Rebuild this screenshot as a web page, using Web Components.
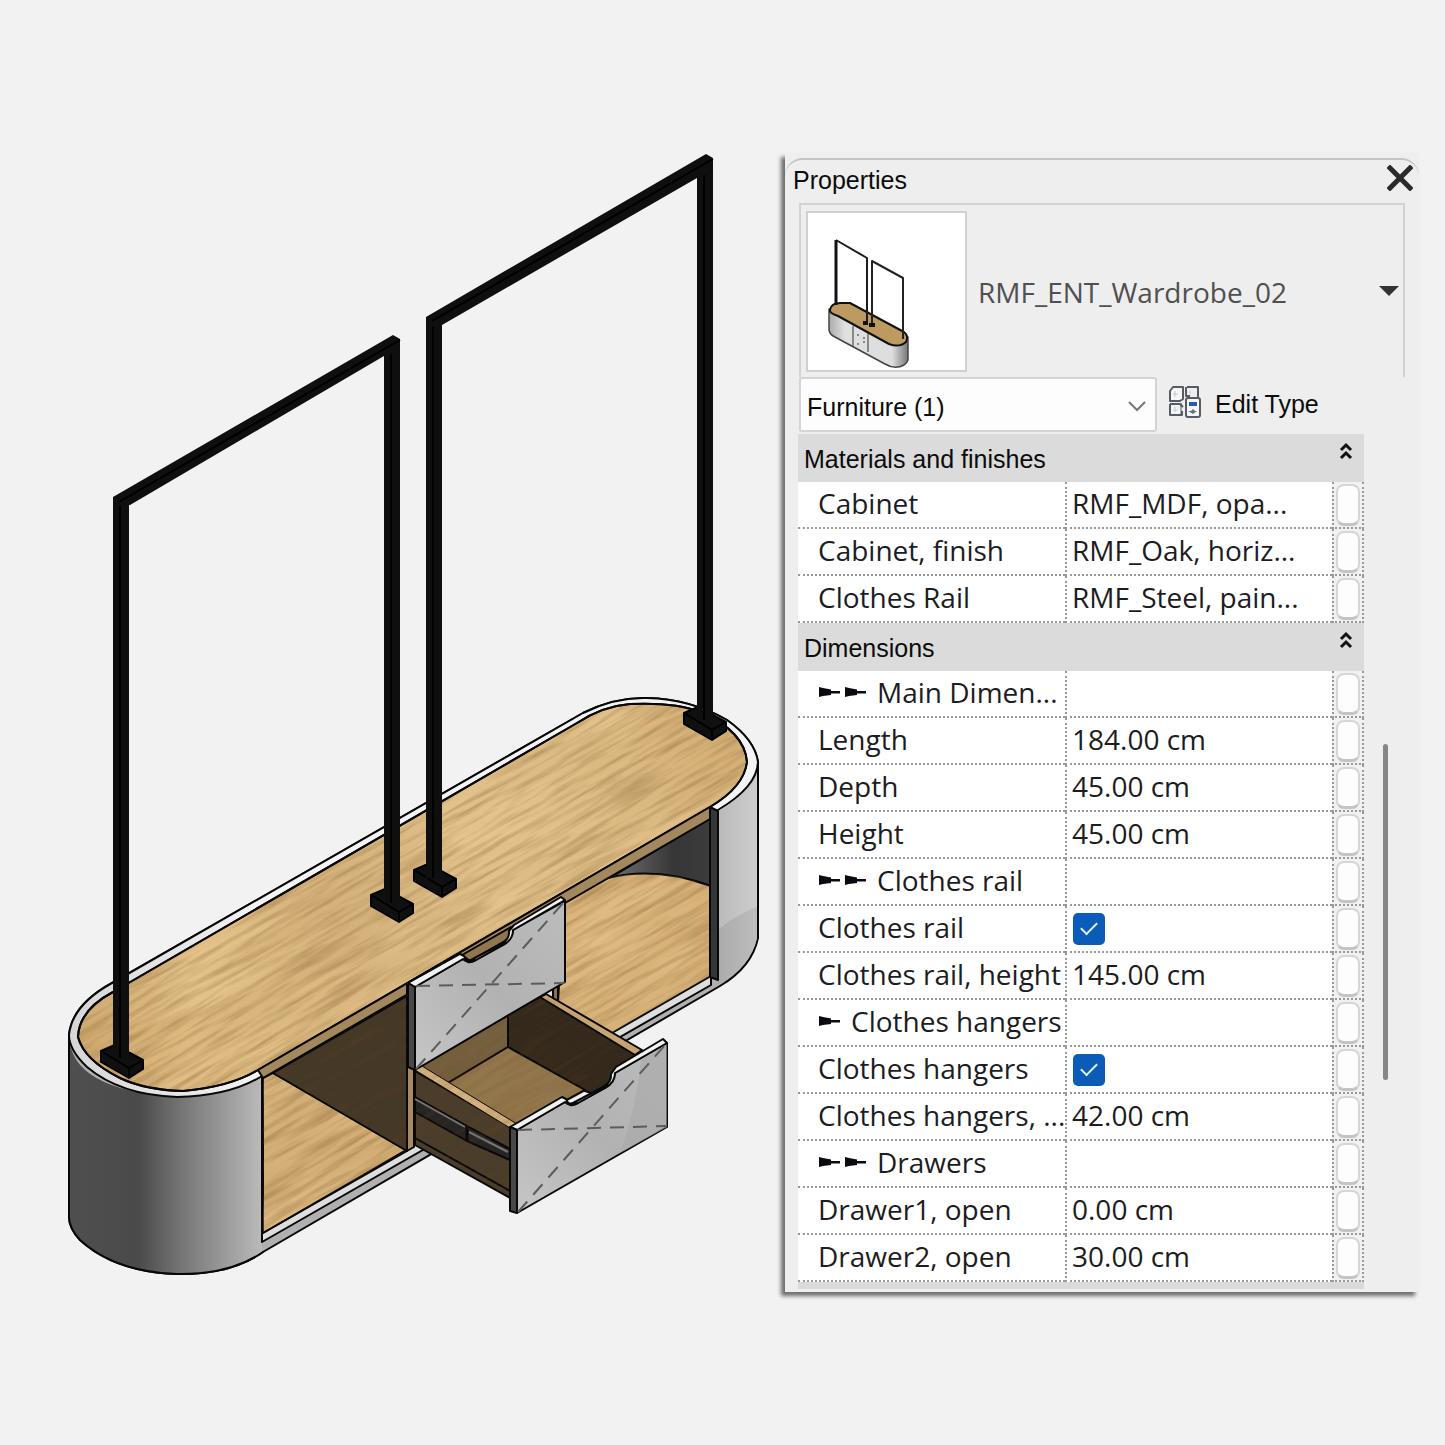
<!DOCTYPE html>
<html lang="en">
<head>
<meta charset="utf-8">
<title>RMF_ENT_Wardrobe_02</title>
<style>
  body { margin: 0; background: #f2f2f2; font-family: "Open Sans", "Noto Sans", sans-serif; color: #1c1c22; }
</style>
</head>
<body>
<product-sheet>
  <wardrobe-drawing slot="model"></wardrobe-drawing>
  <properties-panel slot="panel">
    <type-selector slot="type" name="RMF_ENT_Wardrobe_02"></type-selector>
    <category-bar slot="filter"></category-bar>
    <property-group heading="Materials and finishes"></property-group>
    <property-group heading="Dimensions"></property-group>
  </properties-panel>
</product-sheet>

<script>
const GROUPS = {
  "Materials and finishes": [
    { label: "Cabinet", value: "RMF_MDF, opa..." },
    { label: "Cabinet, finish", value: "RMF_Oak, horiz..." },
    { label: "Clothes Rail", value: "RMF_Steel, pain..." }
  ],
  "Dimensions": [
    { marks: 2, label: "Main Dimen..." },
    { label: "Length", value: "184.00 cm" },
    { label: "Depth", value: "45.00 cm" },
    { label: "Height", value: "45.00 cm" },
    { marks: 2, label: "Clothes rail" },
    { label: "Clothes rail", check: true },
    { label: "Clothes rail, height", value: "145.00 cm" },
    { marks: 1, label: "Clothes hangers" },
    { label: "Clothes hangers", check: true },
    { label: "Clothes hangers, ...", value: "42.00 cm" },
    { marks: 2, label: "Drawers" },
    { label: "Drawer1, open", value: "0.00 cm" },
    { label: "Drawer2, open", value: "30.00 cm" }
  ]
};

class BaseElement extends HTMLElement {
  connectedCallback() {
    if (this.shadowRoot) return;
    this.attachShadow({ mode: "open" }).innerHTML = this.render();
  }
}

customElements.define("product-sheet", class extends BaseElement {
  render() {
    return `
<style>
  :host { display: grid; grid-template-columns: minmax(0, 785fr) minmax(0, 660fr); align-items: start; min-height: 100vh; box-sizing: border-box; padding-top: 150px; }
  main { display: contents; }
</style>
<main><slot name="model"></slot><slot name="panel"></slot></main>`;
  }
});

customElements.define("properties-panel", class extends BaseElement {
  render() {
    return `
<style>
  :host { display: block; margin: 3px 26px 0 0; background: #eee; box-shadow: -4px 4px 4px rgba(0,0,0,.55); padding-top: 5px; }
  .frame { border-top: 2px solid #c4c4c4; border-radius: 18px 18px 0 0; padding: 0 0 3px 13px; }
  header { display: flex; align-items: flex-start; justify-content: space-between; height: 43px; margin-left: -5px; padding-right: 6px; }
  h1 { margin: 0; font: 400 25px/40px "Liberation Sans", sans-serif; color: #0c0c0c; }
  button { border: 0; padding: 0; background: none; display: flex; width: 26px; height: 36px; align-items: center; }
  .body { display: flex; align-items: center; gap: 19px; padding-right: 31px; }
  .list { flex: 1; min-width: 0; padding-bottom: 7px; background: #dadada; }
  .thumb { width: 5px; height: 336px; border-radius: 3px; background: #868686; margin-top: 100px; }
</style>
<section class="frame">
  <header>
    <h1>Properties</h1>
    <button aria-label="Close"><svg width="26" height="26" viewBox="0 0 26 26"><path d="M3 3 23 23M23 3 3 23" stroke="#2b2b2b" stroke-width="5" stroke-linecap="square" fill="none"/></svg></button>
  </header>
  <slot name="type"></slot>
  <slot name="filter"></slot>
  <div class="body"><div class="list"><slot></slot></div><div class="thumb"></div></div>
</section>`;
  }
});

customElements.define("type-selector", class extends BaseElement {
  render() {
    return `
<style>
  :host { display: block; margin: 0 14px 0 1px; }
  button { box-sizing: border-box; display: flex; align-items: center; gap: 11px; width: 100%; height: 174px; padding: 0 4px 0 5px; background: none; border: 2px solid #d2d2d2; border-bottom: 0; font: inherit; font-size: 28px; line-height: 40px; color: #505050; text-align: left; }
  .pic { box-sizing: border-box; width: 161px; height: 161px; border: 2px solid #d0d0d0; background: #fff; display: block; }
  span { flex: 1; padding-top: 2px; }
</style>
<button>
  <svg class="pic" viewBox="808 212 157 157" stroke-linejoin="round">
    <defs><linearGradient id="b"><stop stop-color="#aaa"/><stop offset=".2" stop-color="#e0e0e0"/><stop offset=".8" stop-color="#ddd"/><stop offset="1" stop-color="#777"/></linearGradient></defs>
    <path d="M829 308V329Q830 334 835 336L885 363Q895 369 904 364Q908 361 908 358V336L880 330Z" fill="url(#b)" stroke="#444" stroke-width="1.500"/>
    <path d="M830 309Q831 301 843 302L850 302 904 331Q909 335 906 341Q899 347 889 343L838 315Q829 312 830 309Z" fill="#bd9a60" stroke="#111" stroke-width="2"/>
    <path d="M853 325V345M868 332V351M857 334h2M863 341h2M863 337h2M857 343h2" stroke="#333" stroke-width="1"/>
    <path d="M836 304V239" stroke="#111" stroke-width="3"/>
    <path d="M836 239 867 257V322" fill="none" stroke="#1c1c1c" stroke-width="2"/>
    <path d="M872 324V260L903 277V338" fill="none" stroke="#222" stroke-width="2"/>
    <path d="M863 322h5M869 324h6" stroke="#111" stroke-width="4"/>
  </svg>
  <span>${this.getAttribute("name")}</span>
  <svg width="20" height="10" viewBox="0 0 20 10"><path d="M0 0H20L10 10Z" fill="#333"/></svg>
</button>`;
  }
});

customElements.define("category-bar", class extends BaseElement {
  render() {
    return `
<style>
  :host { display: flex; gap: 11px; height: 57px; margin-left: 1px; color: #0c0c0c; }
  .pick { display: grid; width: 358px; height: 55px; }
  select, .pick svg { grid-area: 1 / 1; }
  select { appearance: none; box-sizing: border-box; border: 2px solid #d4d4d4; border-radius: 3px; background: #fdfdfd; padding: 5px 6px 0; margin: 0; font: 25px/40px "Liberation Sans", sans-serif; color: inherit; }
  .pick svg { place-self: center end; margin: 2px 10px 0 0; pointer-events: none; }
  button { display: flex; align-items: center; gap: 13px; height: 50px; padding: 0; border: 0; background: none; font: 25px/40px "Liberation Sans", sans-serif; color: inherit; white-space: nowrap; }
  button span { padding-top: 3px; }
</style>
<div class="pick">
  <select aria-label="Category"><option>Furniture (1)</option></select>
  <svg width="20" height="12" viewBox="0 0 20 12"><path d="M2 2 10 10 18 2" fill="none" stroke="#777" stroke-width="2"/></svg>
</div>
<button>
  <svg width="34" height="34" viewBox="0 0 34 34" fill="#f6f6f6" stroke="#555c63" stroke-width="2" stroke-linejoin="round">
    <path d="M5 2H15V14L12 16H2V6Z"/><path d="M19 2H30V12M18 2V11H22" fill="none"/>
    <path d="M2 19H12L15 22M2 19V30H14V26" /><path d="M13 18V30" fill="none" stroke-width="1"/>
    <path d="M7 6V12M5 9H10M7 22V27M5 25H10M22 6V9" stroke="#c4c8cc" stroke-width="1"/>
    <rect x="18" y="13" width="14" height="19" rx="2" stroke-width="2"/>
    <rect x="21" y="17" width="8" height="4" fill="#1c62ad" stroke="none"/><path d="M20 26H23L25 24 27 26H29L25 29Z" fill="#6a7178" stroke="none"/>
  </svg>
  <span>Edit Type</span>
</button>`;
  }
});

customElements.define("property-group", class extends BaseElement {
  row(item, i) {
    const mark = `<svg class="mark" width="23" height="12" viewBox="0 0 23 12"><path d="M1 1 5 2 13 3.500V5H22V7.500H13V9L5 10 1 11Z" fill="#0a0a10"/></svg>`;
    const marks = item.marks ? `<span class="marks">${mark.repeat(item.marks)}</span>` : "";
    const id = "p" + i;
    const label = item.check ? `<label for="${id}">${item.label}</label>` : item.label;
    const value = item.check ? `<input type="checkbox" id="${id}" checked>` : (item.value || "");
    return `<tr><th scope="row">${marks}${label}</th><td>${value}</td><td class="assoc"><button aria-label="Associate parameter"></button></td></tr>`;
  }
  render() {
    const heading = this.getAttribute("heading");
    return `
<style>
  :host { display: block; }
  header { display: flex; justify-content: space-between; height: 48px; background: #dbdbdb; padding: 0 10px 0 6px; }
  h2 { margin: 0; font: 400 25px/50px "Liberation Sans", sans-serif; color: #0c0c0c; }
  header button { border: 0; background: none; padding: 8px 0 0; height: 26px; }
  header svg { display: block; }
  table { width: 100%; table-layout: fixed; border-spacing: 0; background: #fff; font-size: 28px; }
  col.side { width: 32px; }
  th, td { box-sizing: border-box; height: 47px; padding: 0 0 3px 5px; line-height: 42px; font-weight: 400; text-align: left; white-space: nowrap; overflow: hidden; border-bottom: 2px dotted #999; }
  th { padding-left: 20px; }
  td { border-left: 2px dotted #999; }
  .marks { display: inline-flex; gap: 3px; margin-right: 10px; vertical-align: 5px; }
  .mark { display: block; }
  td.assoc { padding: 0; border-right: 2px dotted #999; background: #f1f1f1; }
  .assoc button { box-sizing: border-box; display: block; margin: 1px auto 0; width: 24px; height: 42px; border: 2px solid #d6d6d6; border-bottom: 3px solid #c4c4c4; border-radius: 8px; background: #fdfdfd; padding: 0; }
  input { appearance: none; display: block; width: 32px; height: 32px; margin: 3px 0 0 1px; border-radius: 5px; background: #0a5cb8; position: relative; }
  input::after { content: ""; position: absolute; left: 8px; top: 9px; width: 14px; height: 7px; border: solid #e4f0fc; border-width: 0 0 2px 2px; transform: rotate(-45deg); }
</style>
<header>
  <h2>${heading}</h2>
  <button aria-label="Collapse"><svg width="16" height="18" viewBox="0 0 16 18"><path d="M3 8 8 3 13 8M3 16 8 11 13 16" fill="none" stroke="#111" stroke-width="3"/></svg></button>
</header>
<table><colgroup><col><col><col class="side"></colgroup><tbody>${GROUPS[heading].map((r, i) => this.row(r, i)).join("")}</tbody></table>`;
  }
});

customElements.define("wardrobe-drawing", class extends BaseElement {
  post(x, y1, y2) {
    return `<path d="M${x} ${y1}h16V${y2}h-16Z" fill="#0f0f0f" stroke="none"/><path d="M${x + 7} ${y1 + 6}V${y2}" stroke="#000" stroke-width="2"/>`;
  }
  foot(x, y) {
    return `<path d="M${x} ${y}l14-6 28 15v9l-14 9-28-16Z" fill="#101010" stroke="#000"/><path d="M${x} ${y}l28 17 14-8M${x + 28} ${y + 17}v10" stroke="#000" fill="none"/>`;
  }
  render() {
    return `
<style>
  :host { display: block; padding: 0 20px 0 60px; }
  svg { display: block; width: 100%; height: auto; }
</style>
<svg viewBox="60 150 705 1130" role="img" aria-label="Wardrobe" stroke-linejoin="round" fill="none">
  <defs>
    <linearGradient id="cyl" x1="69" x2="263" y1="0" y2="0" gradientUnits="userSpaceOnUse">
      <stop stop-color="#4f4f4f"/><stop offset=".36" stop-color="#4a4a4a"/><stop offset=".55" stop-color="#707070"/><stop offset=".8" stop-color="#9a9a9a"/><stop offset="1" stop-color="#bbb"/>
    </linearGradient>
    <linearGradient id="rim" x1="69" x2="263" y1="0" y2="0" gradientUnits="userSpaceOnUse"><stop stop-color="#d6d6d6"/><stop offset="1" stop-color="#f4f4f4"/></linearGradient>
    <linearGradient id="wall" x1="718" x2="758" y1="0" y2="0" gradientUnits="userSpaceOnUse"><stop stop-color="#bababa"/><stop offset="1" stop-color="#cecece"/></linearGradient>
    <linearGradient id="front" x1="0" x2="1" y1="1" y2="0"><stop stop-color="#c6c6c6"/><stop offset=".5" stop-color="#b2b2b2"/><stop offset="1" stop-color="#bcbcbc"/></linearGradient>
    <linearGradient id="back" x1="620" x2="710" y1="0" y2="0" gradientUnits="userSpaceOnUse"><stop stop-color="#686868"/><stop offset=".6" stop-color="#363636"/><stop offset="1" stop-color="#3c3c3c"/></linearGradient>
    <linearGradient id="oak" x1="80" y1="1080" x2="745" y2="720" gradientUnits="userSpaceOnUse">
      <stop stop-color="#cba56c"/><stop offset=".15" stop-color="#dbb97f"/><stop offset=".4" stop-color="#d4b17a"/><stop offset=".6" stop-color="#dfbe88"/><stop offset=".85" stop-color="#dab880"/><stop offset="1" stop-color="#d2ac72"/>
    </linearGradient>
    <filter id="grain" x="0" y="0" width="1" height="1" color-interpolation-filters="sRGB">
      <feTurbulence type="fractalNoise" baseFrequency=".014 .2" numOctaves="4" seed="8"/>
      <feColorMatrix values="0 0 0 0 .45  0 0 0 0 .3  0 0 0 0 .13  1.500 0 0 0 -.62"/>
    </filter>
    <filter id="cloud" x="0" y="0" width="1" height="1" color-interpolation-filters="sRGB">
      <feTurbulence type="fractalNoise" baseFrequency=".006 .03" numOctaves="3" seed="3"/>
      <feColorMatrix values="0 0 0 0 1  0 0 0 0 .87  0 0 0 0 .66  2.200 0 0 0 -.9"/>
    </filter>
    <clipPath id="wood">
      <path d="M113 992 577 723Q603 706 630 704Q675 702 701 712Q745 732 747 762Q744 787 710 807L258 1070Q230 1087 183 1091Q145 1090 120 1078Q84 1060 78 1037Q79 1010 113 992Z"/>
      <path d="M263 1079 273 1073 406 1150 263 1233Z"/>
      <path d="M565 902 608 878Q655 866 711 886V976L612 1033 558 1002Z"/>
    </clipPath>
    <clipPath id="dark">
      <path d="M273 1073 407 996V1150Z"/><path d="M415 1070 508 1015 545 996 635 1054 640 1064 600 1096 563 1100 517 1128 510 1197 415 1145Z"/>
    </clipPath>
  </defs>

  <g stroke="#080808" stroke-width="2">
    <path d="M69 1035Q72 1005 112 983L583 713Q615 697 647 698Q690 699 727 720Q755 740 758 762V938Q752 967 720 986L263 1252Q230 1275 177 1274Q115 1272 80 1240Q69 1228 69 1217Z" fill="#b0b0b0"/>
    <path d="M69 1035V1217Q69 1228 80 1240Q115 1272 177 1274Q230 1275 262 1253V1076Q230 1096 177 1097Q70 1090 69 1035Z" fill="url(#cyl)" stroke="none"/>
    <path d="M69 1035V1217Q69 1228 80 1240Q115 1272 177 1274Q230 1275 263 1252"/>
    <path d="M69 1035Q72 1005 112 983L583 713Q615 697 647 698Q690 699 727 720Q755 740 758 762Q757 787 718 810L262 1076Q230 1096 177 1097Q120 1095 87 1067Q69 1050 69 1035Z" fill="url(#rim)"/>
    <path d="M757 774Q749 793 718 811V985Q751 966 757 938Z" fill="url(#wall)" stroke="none"/>
    <path d="M718 930Q735 915 757 907V938Q751 965 718 985Z" fill="#000" opacity=".08" stroke="none"/>
    <path d="M758 764V938"/>
    <path d="M262 1078 711 815V985L262 1242Z" fill="#dedede"/>
    <path d="M711 818 608 879Q655 866 711 886Z" fill="url(#back)"/>
    <path d="M565 902 608 878Q655 866 711 886V976L612 1033 558 1002Z" fill="#d5b077"/>
    <path d="M263 1078 273 1073 406 1150 263 1233Z" fill="#d3ae76"/>
    <path d="M113 992 577 723Q603 706 630 704Q675 702 701 712Q745 732 747 762Q744 787 710 807L258 1070Q230 1087 183 1091Q145 1090 120 1078Q84 1060 78 1037Q79 1010 113 992Z" fill="url(#oak)"/>
  </g>
  <g clip-path="url(#wood)">
    <g transform="rotate(-30 400 950)">
      <rect x="-50" y="600" width="900" height="700" filter="url(#cloud)" fill="#fff" opacity=".35"/>
      <rect x="-50" y="600" width="900" height="700" filter="url(#grain)" fill="#fff" opacity=".5"/>
    </g>
  </g>
  <g stroke="#080808" stroke-width="2">
    <path d="M113 992 577 723Q603 706 630 704Q675 702 701 712Q745 732 747 762Q744 787 710 807L258 1070Q230 1087 183 1091Q145 1090 120 1078Q84 1060 78 1037Q79 1010 113 992Z"/>
    <path d="M258 1070 710 807V819L263 1078Z" fill="#a3885e"/>
    <path d="M273 1073 407 996V1151Z" fill="#443827"/>
    <path d="M407 985H414V1147L407 1151Z" fill="#a88a60"/>
    <path d="M262 1076V1242M263 1233 407 1151"/>
    <path d="M710 807 718 811V980L710 977Z" fill="#363636"/>
    <path d="M553 985V999L558 1002V985Z" fill="#8c7048"/>

    <path d="M415 1070 508 1015V1047L448 1083Z" fill="#75603f"/>
    <path d="M508 1014 542 996 635 1054 640 1064 600 1096 585 1091 508 1047Z" fill="#33291c"/>
    <path d="M508 1047 585 1090 563 1102 517 1128 448 1083Z" fill="#92764c"/>
    <path d="M415 1071 510 1127V1198L415 1145Z" fill="#4a3d2b"/>
    <path d="M415 1138 510 1191"/>
    <path d="M415 1070 422 1066 517 1124 510 1128Z" fill="#d2b080" stroke-width="1"/>
    <path d="M540 997 546 994 642 1050 635 1055Z" fill="#c7a473"/>
    <path d="M415 1097 467 1126 510 1149V1160L467 1141 415 1112Z" fill="#252525"/>
    <path d="M415 1099 465 1127M469 1132 508 1152" stroke="#777"/>
    <path d="M467 1126V1141" stroke-width="3"/>
  </g>
  <g clip-path="url(#dark)"><rect x="-50" y="600" width="900" height="700" transform="rotate(-30 400 950)" filter="url(#grain)" fill="#fff" opacity=".3"/></g>

  <g stroke="#080808" stroke-width="2">
    <path d="M462 955 511 927 512 937 470 961Z" fill="#8f7550"/>
    <path d="M415 987 463 959 468 962Q471 963 476 960L503 945Q512 939 513 930L565 901V982L415 1070Z" fill="url(#front)"/>
    <path d="M408 983 460 954 464 956Q466 962 471 960L501 944Q510 939 509 931L514 925 561 897 565 900 513 930Q513 940 503 945L476 960Q468 964 463 959L415 987Z" fill="#f2f2f2"/>
    <path d="M408 983 415 987V1070L408 1067Z" fill="#484848"/>
    <path d="M517 1130 565 1102 570 1105Q573 1106 578 1103L605 1088Q614 1082 615 1073L667 1043V1127L517 1213Z" fill="url(#front)"/>
    <path d="M641 1060 667 1044V1127L620 1153Q636 1110 641 1060Z" fill="#a9a9a9" opacity=".6" stroke="none"/>
    <path d="M510 1127 562 1097 566 1099Q568 1105 573 1103L603 1087Q612 1082 611 1074L616 1067 663 1039 667 1043 615 1073Q615 1083 605 1088L578 1103Q570 1107 565 1102L517 1130Z" fill="#f2f2f2"/>
    <path d="M510 1127 517 1130V1213L510 1211Z" fill="#484848"/>
    <path d="M416 1069 564 902M416 986 565 983M518 1212 666 1044M518 1130 666 1126" stroke="#5c5c5c" stroke-dasharray="14 9" stroke-width="2"/>
  </g>

  <g stroke-width="2">
    ${this.foot(101, 1051)}${this.foot(371, 895)}${this.foot(414, 870)}${this.foot(684, 713)}
    ${this.post(113, 497, 1058)}${this.post(384, 345, 903)}${this.post(426, 317, 878)}${this.post(697, 165, 720)}
    <path d="M113 497 393 335 400 339V352L384 356 130 505 113 507Z" fill="#0f0f0f"/>
    <path d="M426 317 706 154 713 158V172L697 178 442 325 426 328Z" fill="#0f0f0f"/>
    <path d="M119 502 400 340M432 321 713 159" stroke="#000"/>
  </g>
</svg>`;
  }
});
</script>
</body>
</html>
